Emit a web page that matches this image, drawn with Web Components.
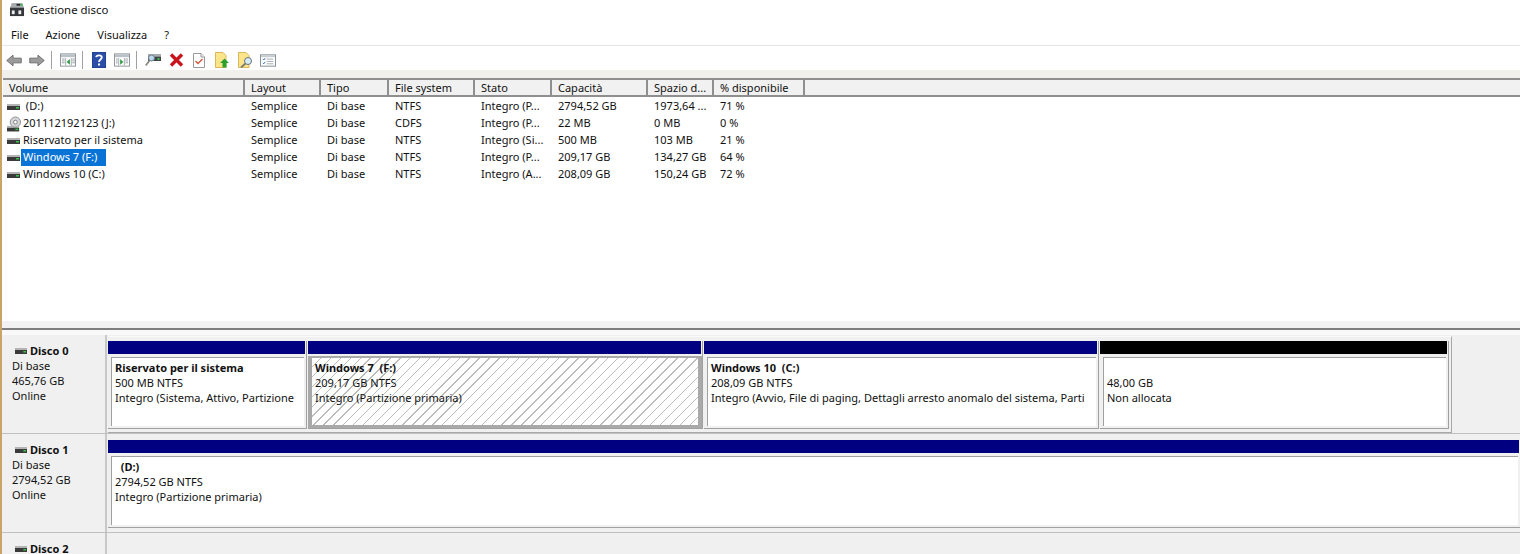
<!DOCTYPE html>
<html lang="it">
<head>
<meta charset="utf-8">
<title>Gestione disco</title>
<style>
  html, body { margin: 0; padding: 0; background: #fff; overflow: hidden; }
  body { font: 11px "Noto Sans", "Liberation Sans", sans-serif; color: #111; }
</style>
</head>
<body>
<disk-app></disk-app>
<script>
const FONT = '"Noto Sans", "Liberation Sans", sans-serif';

const drive = (w, h) => `<svg width="${w}" height="${h}" viewBox="0 0 13 6" preserveAspectRatio="none"><rect width="13" height="2" fill="#b4b4b4"/><rect y="2" width="13" height="4" fill="#3a3a3a"/><rect x="9" y="3" width="3" height="1.500" fill="#39c24a"/></svg>`;
const DRIVE = drive(13, 6);
const CDROM = `<svg width="15" height="16" viewBox="0 0 15 16"><circle cx="9" cy="6" r="5.500" fill="#d4d6d8" stroke="#8a8c90"/><circle cx="9" cy="6" r="2" fill="#fff" stroke="#777"/><rect x="0" y="10" width="13" height="2" fill="#b4b4b4"/><rect y="12" width="13" height="4" fill="#3a3a3a"/><rect x="9" y="13" width="3" height="1.500" fill="#39c24a"/></svg>`;

const TOOL_ICONS = {
  back: `<svg width="17" height="13" viewBox="0 0 17 13"><path d="M.8 6.500 7.500.8v3.200h8.700v5H7.500v3.200z" fill="#9b9b9b" stroke="#6d6d6d"/></svg>`,
  forward: `<svg width="17" height="13" viewBox="0 0 17 13"><path d="M16.200 6.500 9.500.8v3.200H.8v5h8.700v3.200z" fill="#9b9b9b" stroke="#6d6d6d"/></svg>`,
  panelLeft: `<svg width="17" height="14" viewBox="0 0 17 14"><rect x=".5" y=".5" width="16" height="13" fill="#fff" stroke="#8c9298"/><rect x="1" y="1" width="15" height="3" fill="#b9c0c6"/><path d="M6 5v8M12 5v8" stroke="#a4a9ae"/><path d="M2 6h3M2 8h3M2 10h3M13 6h3M13 8h3M13 10h3" stroke="#9aa0a6"/><path d="M10.500 6v6L7 9z" fill="#2f9e44"/></svg>`,
  help: `<svg width="14" height="16" viewBox="0 0 14 16"><rect width="14" height="16" fill="#2b4fa8"/><rect width="14" height="16" fill="none" stroke="#1c3680"/><path d="M4.200 5.200C4.400 3 9.600 2.600 9.800 5.400c.1 2-2.800 2.300-2.800 4.600" fill="none" stroke="#fff" stroke-width="1.800"/><rect x="6" y="11.500" width="2" height="2" fill="#fff"/></svg>`,
  panelRight: `<svg width="17" height="14" viewBox="0 0 17 14"><rect x=".5" y=".5" width="16" height="13" fill="#fff" stroke="#8c9298"/><rect x="1" y="1" width="15" height="3" fill="#b9c0c6"/><path d="M5 5v8M11 5v8" stroke="#a4a9ae"/><path d="M2 6h2M2 8h2M2 10h2M12 6h3M12 8h3M12 10h3" stroke="#9aa0a6"/><path d="M6.500 6v6L10 9z" fill="#2f9e44"/></svg>`,
  connect: `<svg width="16" height="14" viewBox="0 0 16 14"><rect x="3" y="1" width="13" height="2.500" fill="#a9adb0"/><rect x="3" y="3.500" width="13" height="4.500" fill="#3e4448"/><rect x="12.500" y="5" width="2" height="2" fill="#39c24a"/><circle cx="6.500" cy="5" r="3" fill="#bcd8ec" stroke="#6f7f8a"/><path d="M4.500 7.500 .8 12.500" stroke="#8a8a80" stroke-width="1.800"/></svg>`,
  remove: `<svg width="15" height="14" viewBox="0 0 15 14"><path d="M2 1.500 13 12.500M13 1.500 2 12.500" stroke="#c8141c" stroke-width="3.400"/></svg>`,
  check: `<svg width="12" height="15" viewBox="0 0 12 15"><path d="M.5.500h7.500l3.500 3.500v10.500H.5z" fill="#fff" stroke="#9a9a9a"/><path d="M8 .5V4h3.500" fill="#eee" stroke="#9a9a9a"/><path d="M2.500 8 5 10.500 9.500 6" fill="none" stroke="#d9553c" stroke-width="1.400"/></svg>`,
  folderUp: `<svg width="14" height="16" viewBox="0 0 14 16"><path d="M.5.500H8l3 3V15.500H.5z" fill="#fce48a" stroke="#d8b85a"/><path d="M9.500 6.500 14 11h-2.500v4.500h-4V11H5z" fill="#2aa12f"/></svg>`,
  folderSearch: `<svg width="15" height="16" viewBox="0 0 15 16"><path d="M.5.500H8l3 3V15.500H.5z" fill="#fce48a" stroke="#d8b85a"/><circle cx="10" cy="9" r="3.500" fill="#d8ecf8" stroke="#68747c"/><path d="M7.500 11.500 3 15.500" stroke="#7c7c70" stroke-width="1.800"/></svg>`,
  list: `<svg width="17" height="13" viewBox="0 0 17 13"><rect x=".5" y=".5" width="16" height="12" fill="#fff" stroke="#7f8a94"/><rect x="1" y="1" width="15" height="2" fill="#c6ccd2"/><path d="M7 5h7M7 7.500h7M7 10h7" stroke="#a4aab0"/><path d="M3 5l1 1 1.500-2M3 9l1 1 1.500-2" fill="none" stroke="#2a62b0"/></svg>`
};

class DiskTitlebar extends HTMLElement {
  connectedCallback() {
    if (this.shadowRoot) return;
    this.attachShadow({ mode: "open" }).innerHTML = `
      <style>
        :host { display: flex; align-items: center; height: 20px; padding: 0 0 1px 7px; gap: 5px; box-sizing: border-box; }
        span { font-size: 11.400px; }
      </style>
      <svg width="16" height="15" viewBox="0 0 17 16">
        <path d="M3 1h11l2 5H1z" fill="#a8acb0"/>
        <rect x="8" y="2" width="4" height="2" fill="#2c2c2c"/><rect x="12.500" y="2" width="2" height="2" fill="#39c24a"/>
        <rect x="1" y="6" width="15" height="9" fill="#34383c"/>
        <rect x="3" y="9" width="3" height="4" fill="#eee"/><rect x="10" y="9" width="3" height="4" fill="#eee"/>
      </svg>
      <span><slot></slot></span>`;
  }
}

class DiskMenubar extends HTMLElement {
  connectedCallback() {
    if (this.shadowRoot) return;
    this.attachShadow({ mode: "open" }).innerHTML = `
      <style>
        :host { display: flex; align-items: center; height: 26px; padding: 4px 0 0 9px; gap: 17px; box-sizing: border-box; border-bottom: 1px solid #e6e6e6; }
      </style><slot></slot>`;
  }
}

class DiskToolbar extends HTMLElement {
  connectedCallback() {
    if (this.shadowRoot) return;
    const groups = [["back", "forward"], ["panelLeft"], ["help", "panelRight"],
      ["connect", "remove", "check", "folderUp", "folderSearch", "list"]];
    this.attachShadow({ mode: "open" }).innerHTML = `
      <style>
        :host { display: flex; align-items: center; height: 24px; padding: 4px 0 0 4px; box-sizing: border-box; }
        .group { display: flex; align-items: center; gap: 7px; }
        .tool { display: flex; width: 16px; justify-content: center; }
        .sep { width: 1px; height: 18px; background: #a0a0a0; margin: 0 8px 0 6px; }
      </style>
      ${groups.map(g => `<div class="group">${g.map(n => `<span class="tool">${TOOL_ICONS[n]}</span>`).join("")}</div>`).join('<div class="sep"></div>')}`;
  }
}

const COLS = [
  ["Volume", 242], ["Layout", 76], ["Tipo", 68], ["File system", 86], ["Stato", 77],
  ["Capacità", 96], ["Spazio d...", 66], ["% disponibile", 91]
];
const ROWS = [
  [DRIVE, "  (D:)", "Semplice", "Di base", "NTFS", "Integro (P...", "2794,52 GB", "1973,64 ...", "71 %"],
  [CDROM, "201112192123 (J:)", "Semplice", "Di base", "CDFS", "Integro (P...", "22 MB", "0 MB", "0 %"],
  [DRIVE, "Riservato per il sistema", "Semplice", "Di base", "NTFS", "Integro (Si...", "500 MB", "103 MB", "21 %"],
  [DRIVE, "Windows 7 (F:)", "Semplice", "Di base", "NTFS", "Integro (P...", "209,17 GB", "134,27 GB", "64 %", true],
  [DRIVE, "Windows 10 (C:)", "Semplice", "Di base", "NTFS", "Integro (A...", "208,09 GB", "150,24 GB", "72 %"]
];

class VolumeList extends HTMLElement {
  connectedCallback() {
    if (this.shadowRoot) return;
    const tpl = COLS.map(c => c[1] + "px").join(" ") + " 1fr";
    const head = COLS.map(c => `<div class="th">${c[0]}</div>`).join("") + `<div class="th last"></div>`;
    const rows = ROWS.map(r => {
      const cells = r.slice(2, 9).map(t => `<div class="td">${t}</div>`).join("");
      const name = r[1].trimStart() === r[1] ? r[1] : " " + r[1].trim();
      return `<div class="row"><div class="vol"><span class="ico">${r[0]}</span><span class="name${r[9] ? " sel" : ""}">${name}</span></div>${cells}</div>`;
    }).join("");
    this.attachShadow({ mode: "open" }).innerHTML = `
      <style>
        :host { display: block; height: 243px; background: #fff; box-sizing: border-box; }
        .head, .row { display: grid; grid-template-columns: ${tpl}; }
        .head { height: 19px; border-top: 2px solid #8f8f8f; border-bottom: 2px solid #8f8f8f; box-sizing: border-box; background: #f1f1f1; margin-left: 1px; }
        .th { padding-left: 6px; line-height: 16px; border-right: 2px solid #8f8f8f; white-space: nowrap; overflow: hidden; box-sizing: border-box; }
        .th.last { border-right: 0; }
        .rows { padding-top: 1px; margin-left: 1px; }
        .row { height: 17px; line-height: 16px; }
        .td { padding-left: 6px; white-space: nowrap; overflow: hidden; }
        .vol { display: flex; align-items: flex-start; padding-left: 4px; white-space: pre; }
        .ico { width: 14px; display: flex; height: 17px; align-items: center; flex: none; }
        .name { padding: 0 2px; height: 17px; box-sizing: border-box; }
        .sel { background: #0a74d6; color: #fff; min-width: 85px; }
      </style>
      <div class="head">${head}</div>
      <div class="rows">${rows}</div>`;
  }
}

class DiskPartition extends HTMLElement {
  connectedCallback() {
    if (this.shadowRoot) return;
    this.attachShadow({ mode: "open" }).innerHTML = `
      <style>
        :host { display: flex; flex-direction: column; min-width: 0; --bar: #000080; border-right: 1px solid #a0a0a0; border-bottom: 1px solid #a0a0a0; box-sizing: border-box; }
        :host([unallocated]) { --bar: #000; }
        :host([open-end]) { border-right: 0; }
        .bar { height: 13px; background: var(--bar); flex: none; margin-right: 1px; }
        .box { flex: 1; margin-top: 2px; padding: 1px 2px 2px 3px; background: #f0f0f0; box-sizing: border-box; display: flex; min-height: 0; }
        .in { flex: 1; min-width: 0; background: #fff; border-top: 1px solid #a0a0a0; border-left: 1px solid #a0a0a0; padding: 2px 0 0 3px; line-height: 15px; white-space: nowrap; overflow: hidden; }
        :host([selected]) .box { padding: 0 0 0 0; background: transparent; }
        :host([selected]) .in { flex: 1; border: solid #a9a9a9; border-width: 2px 4px 3px 4px; padding: 2px 0 0 3px; background: repeating-linear-gradient(135deg, #fff 0 6px, #bcbcbc 6px 7px); }
        b { display: block; font-weight: 700; height: 15px; white-space: pre; }
      </style>
      <div class="bar"></div>
      <div class="box"><div class="in"><b>${this.getAttribute("label") || ""}</b><slot></slot></div></div>`;
  }
}

class DiskRow extends HTMLElement {
  connectedCallback() {
    if (this.shadowRoot) return;
    const info = (this.getAttribute("info") || "").split("|").map(t => `<div>${t}</div>`).join("");
    this.attachShadow({ mode: "open" }).innerHTML = `
      <style>
        :host { display: grid; grid-template-columns: 105px 1fr; background: #f0f0f0; border-bottom: 1px solid #c0c0c0; box-sizing: border-box; }
        .label { border-right: 2px solid #c8c8c8; padding: 8px 0 0 10px; line-height: 15px; }
        .name { display: flex; align-items: center; font-weight: 700; gap: 3px; height: 15px; margin-left: 3px; }
        .name span { line-height: 11px; }
        .content { min-width: 0; padding: 1px 0 0 1px; display: flex; }
      </style>
      <div class="label"><div class="name">${drive(12, 6)}<span>${this.getAttribute("name")}</span></div>${info}</div>
      <div class="content"><slot></slot></div>`;
  }
}

class PartitionStrip extends HTMLElement {
  connectedCallback() {
    if (this.shadowRoot) return;
    this.attachShadow({ mode: "open" }).innerHTML = `
      <style>
        :host { display: grid; grid-template-columns: 199px 395px 395px 349px; column-gap: 1px; flex: none; width: 1344px; height: 97px; box-sizing: border-box; border: 1px solid #a8a8a8; border-top-color: #fafafa; border-left: 0; padding-top: 4px; padding-bottom: 3px; }
      </style><slot></slot>`;
  }
}

class DiskApp extends HTMLElement {
  connectedCallback() {
    if (this.shadowRoot) return;
    this.attachShadow({ mode: "open" }).innerHTML = `
      <style>
        :host { display: block; width: 1520px; height: 554px; overflow: hidden; box-sizing: border-box; border-left: 2px solid #c8a36a; background: #fff; font: 11px ${FONT}; color: #111; }
        .band { height: 8px; background: #f2f0ec; }
        .split { height: 7px; background: #f2f2f2; border-bottom: 2px solid #7d7d7d; }
        .graph { background: #f9f9f9; padding-top: 5px; }
      </style>
      <disk-titlebar>Gestione disco</disk-titlebar>
      <disk-menubar><span>File</span><span>Azione</span><span>Visualizza</span><span>?</span></disk-menubar>
      <disk-toolbar></disk-toolbar>
      <div class="band"></div>
      <volume-list></volume-list>
      <div class="split"></div>
      <div class="graph">
        <disk-row name="Disco 0" info="Di base|465,76 GB|Online" style="height:99px">
          <partition-strip>
            <disk-partition label="Riservato per il sistema">500 MB NTFS<br>Integro (Sistema, Attivo, Partizione</disk-partition>
            <disk-partition label="Windows 7  (F:)" selected>209,17 GB NTFS<br>Integro (Partizione primaria)</disk-partition>
            <disk-partition label="Windows 10  (C:)">208,09 GB NTFS<br>Integro (Avvio, File di paging, Dettagli arresto anomalo del sistema, Parti</disk-partition>
            <disk-partition label=" " unallocated>48,00 GB<br>Non allocata</disk-partition>
          </partition-strip>
        </disk-row>
        <disk-row name="Disco 1" info="Di base|2794,52 GB|Online" style="height:99px">
          <disk-partition label="  (D:)" open-end style="flex:1;height:88px;margin-top:5px">2794,52 GB NTFS<br>Integro (Partizione primaria)</disk-partition>
        </disk-row>
        <disk-row name="Disco 2" style="height:40px"></disk-row>
      </div>`;
  }
}

customElements.define("disk-titlebar", DiskTitlebar);
customElements.define("disk-menubar", DiskMenubar);
customElements.define("disk-toolbar", DiskToolbar);
customElements.define("volume-list", VolumeList);
customElements.define("disk-partition", DiskPartition);
customElements.define("partition-strip", PartitionStrip);
customElements.define("disk-row", DiskRow);
customElements.define("disk-app", DiskApp);
</script>
</body>
</html>
